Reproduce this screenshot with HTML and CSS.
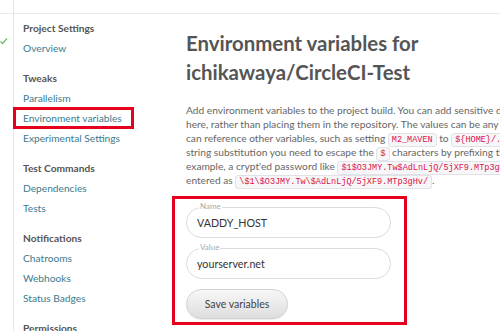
FILE: index.html
```html
<!DOCTYPE html>
<html lang="en">
<head>
    <meta charset="UTF-8">
    <meta name="viewport" content="width=device-width, initial-scale=1.0">
    <title>Environment variables - CircleCI</title>
    <link rel="stylesheet" href="styles.css">
</head>
<body>
    <div class="app">
        <!-- narrow slice of the project list -->
        <div class="rail">
            <div class="rail-top"></div>
            <div class="rail-check">
                <svg width="8" height="8" viewBox="0 0 8 8"><path d="M0.5 4.5 L2.5 6.5 L7 1.5" fill="none" stroke="#6cc06c" stroke-width="1.3"/></svg>
            </div>
        </div>

        <div class="page">
            <div class="page-top"></div>
            <div class="page-body">
                <!-- Settings nav -->
                <div class="settings-nav">
                    <h4>Project Settings</h4>
                    <a href="#">Overview</a>

                    <h4>Tweaks</h4>
                    <a href="#">Parallelism</a>
                    <a href="#" class="marked">Environment variables</a>
                    <a href="#">Experimental Settings</a>

                    <h4>Test Commands</h4>
                    <a href="#">Dependencies</a>
                    <a href="#">Tests</a>

                    <h4>Notifications</h4>
                    <a href="#">Chatrooms</a>
                    <a href="#">Webhooks</a>
                    <a href="#">Status Badges</a>

                    <h4>Permissions</h4>
                </div>

                <!-- Main content -->
                <div class="content">
                    <h2>Environment variables for<br>ichikawaya/CircleCI-Test</h2>
                    <p class="intro">
                        Add environment variables to the project build. You can add sensitive data (e.g. API keys)<br>
                        here, rather than placing them in the repository. The values can be any bash expression and<br>
                        can reference other variables, such as setting <code>M2_MAVEN</code> to <code>${HOME}/.m2)</code>. To disable<br>
                        string substitution you need to escape the <code>$</code> characters by prefixing them with <code>\</code>. For<br>
                        example, a crypt'ed password like <code>$1$O3JMY.Tw$AdLnLjQ/5jXF9.MTp3gHv/</code> would be<br>
                        entered as <code>\$1\$O3JMY.Tw\$AdLnLjQ/5jXF9.MTp3gHv/</code>.
                    </p>

                    <form class="env-form marked-box">
                        <div class="field">
                            <label>Name</label>
                            <input type="text" value="VADDY_HOST">
                        </div>
                        <div class="field">
                            <label>Value</label>
                            <input type="text" value="yourserver.net">
                        </div>
                        <button type="button" class="btn">Save variables</button>
                    </form>
                </div>
            </div>
        </div>
    </div>
</body>
</html>
```

FILE: styles.css
```css
html, body {
    margin: 0;
    padding: 0;
    background: white;
    overflow: hidden;
}
body {
    font-family: Lato, "Open Sans", sans-serif;
    color: #666;
    width: 500px;
    height: 331px;
}
.app {
    display: flex;
    height: 331px;
}
.rail {
    width: 13px;
    flex: none;
    border-right: 1px solid #e6e6e6;
}
.rail-top, .page-top {
    height: 13px;
    border-bottom: 1px solid #ebebeb;
}
.rail-check {
    padding: 23px 0 0 0;
    line-height: 0;
}
.page {
    flex: 1;
    min-width: 0;
}
.page-body {
    display: flex;
}
.settings-nav {
    width: 172px;
    flex: none;
    padding: 4px 0 0 9px;
    box-sizing: border-box;
    font-size: 10.2px;
    line-height: 20px;
}
.settings-nav h4 {
    margin: 0;
    font-size: 10.2px;
    line-height: 20px;
    font-weight: bold;
    color: #555;
}
.settings-nav a {
    display: block;
    line-height: 20px;
    color: #3b7b8e;
    text-decoration: none;
}
.settings-nav a + h4 {
    margin-top: 10px;
}
.settings-nav a.marked {
    width: max-content;
    border: 3px solid #e5001d;
    margin: -1px 0 -1px -10px;
    padding: 0 9px 0 7px;
    line-height: 16px;
}
.content {
    white-space: nowrap;
}
.content h2 {
    margin: 15px 0 0;
    font-size: 20.4px;
    line-height: 29px;
    font-weight: bold;
    color: #555;
}
.intro {
    margin: 16px 0 0;
    font-size: 10.2px;
    line-height: 14px;
}
.intro code {
    font-family: "Liberation Mono", monospace;
    font-size: 8.5px;
    line-height: 10px;
    color: #dd1144;
    background: #f7f7f9;
    border: 1px solid #e1e1e8;
    border-radius: 3px;
    padding: 1px 3px;
}
.marked-box {
    border: 3px solid #e5001d;
}
.env-form {
    width: 235px;
    box-sizing: border-box;
    margin: 9px 0 0 -14px;
    padding: 8px 0 3px 11px;
    display: flex;
    flex-direction: column;
    gap: 10px;
    align-items: flex-start;
}
.field {
    position: relative;
}
.field input {
    width: 205px;
    height: 31px;
    box-sizing: border-box;
    border: 1px solid #dcdcdc;
    border-radius: 16px;
    padding: 0 10px;
    font-family: Lato, sans-serif;
    font-size: 10.7px;
    color: #333;
    outline: none;
}
.field label {
    position: absolute;
    left: 13px;
    top: -5px;
    background: white;
    padding: 0 1px;
    font-size: 8px;
    line-height: 9px;
    color: #aaa;
}
.btn {
    width: 102px;
    height: 30px;
    border: 1px solid #d2d2d2;
    border-radius: 15px;
    background: linear-gradient(#f7f7f7, #dedede);
    box-shadow: 0 1px 1px rgba(0,0,0,0.08);
    font-family: Lato, sans-serif;
    font-size: 10.5px;
    color: #444;
}
```
